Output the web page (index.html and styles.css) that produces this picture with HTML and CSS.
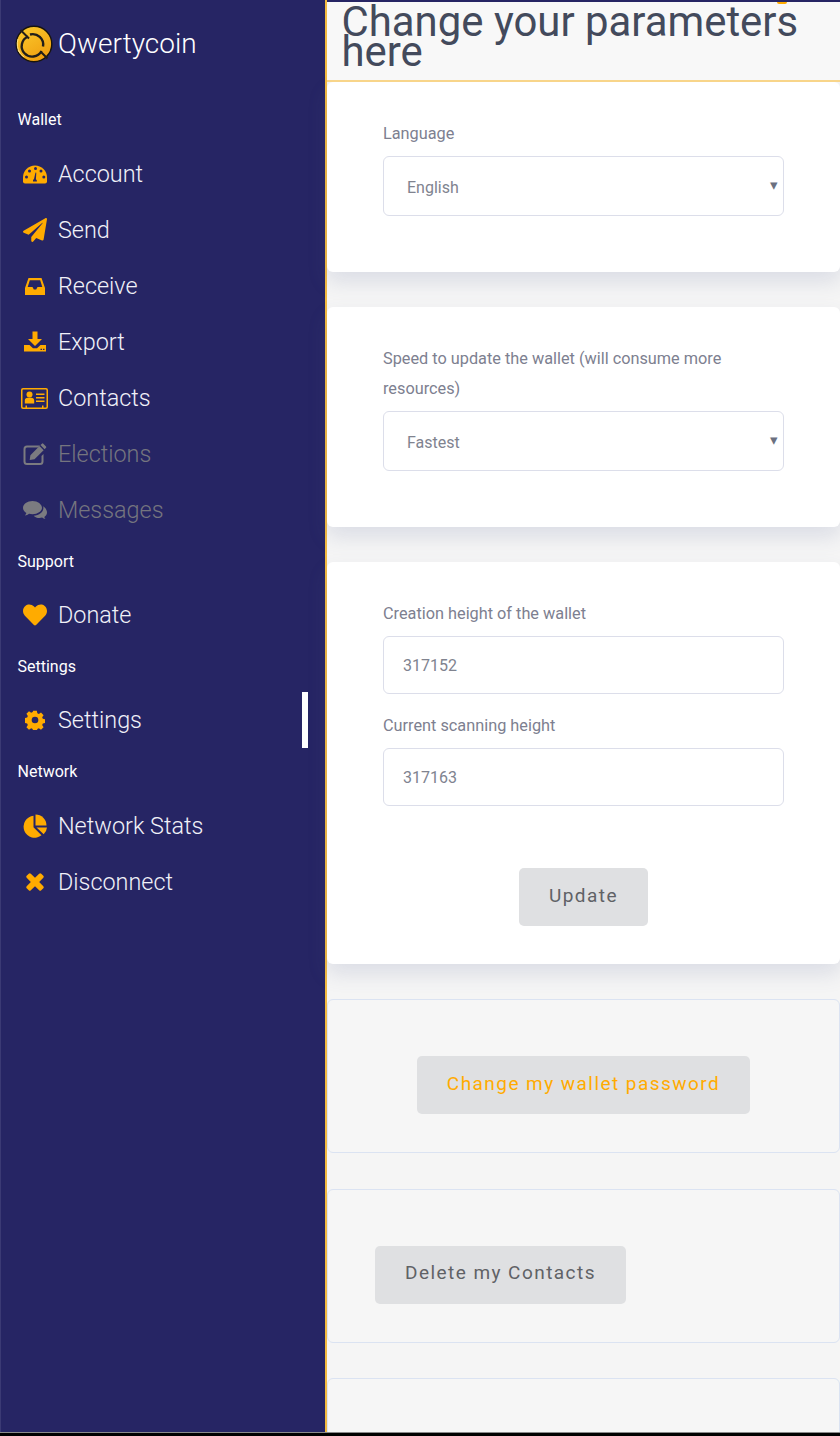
FILE: index.html
```html
<!DOCTYPE html>
<html>
<head>
  <meta charset="utf-8">
  <title>Qwertycoin - Settings</title>
  <link rel="stylesheet" href="styles.css">
</head>
<body>
  <div class="app">
    <!-- Left side: navigation -->
    <nav class="sidebar">
      <div class="brand">
        <svg class="logo" viewBox="0 0 38 38">
          <defs>
            <linearGradient id="coin" x1="0.2" y1="0" x2="0.8" y2="1">
              <stop offset="0" stop-color="#fbc92c"/>
              <stop offset="1" stop-color="#ef9c0e"/>
            </linearGradient>
          </defs>
          <circle cx="19" cy="19" r="17.800" fill="url(#coin)" stroke="#17140f" stroke-width="1.400"/>
          <path d="M13 11.500a10.500 10.500 0 1 0 13.500 14.500M15 9.500a10.500 10.500 0 0 1 13 12" fill="none" stroke="#221f1a" stroke-width="2.400"/>
          <path d="M5.500 5 14 13.500M25.500 26.500 32.500 33.500" fill="none" stroke="#221f1a" stroke-width="2"/>
          <path d="M9 32a17 17 0 0 1-6-7M3 14a17 17 0 0 0 2 14" fill="none" stroke="#fde08a" stroke-width="1"/>
        </svg>
        <span class="brand-name">Qwertycoin</span>
      </div>

      <div class="nav-label nav-label-tall">Wallet</div>
      <a class="nav-item">
        <svg class="nav-icon" viewBox="0 0 24 24">
          <path d="M2 21.500A2 2 0 0 1 0 19.500V15.500a12 12 0 0 1 24 0v4a2 2 0 0 1-2 2z"/>
          <g class="icon-cut">
            <circle cx="3.500" cy="15" r="1.500"/>
            <circle cx="6.500" cy="9" r="1.500"/>
            <circle cx="12.500" cy="6.500" r="1.500"/>
            <circle cx="18" cy="9" r="1.500"/>
            <circle cx="20.800" cy="15" r="1.500"/>
            <path d="M10 19.500a2.200 2.200 0 0 1 1-2.500l1.500-6.500.8.200-.4 6.500a2.200 2.200 0 0 1 1 2.300z"/>
          </g>
        </svg>
        Account
      </a>
      <a class="nav-item">
        <svg class="nav-icon" viewBox="0 0 512 512"><path d="M476 3.200L12.500 270.600c-18.100 10.400-15.800 35.600 2.200 43.200L121 358.400l287.300-253.200c5.500-4.900 13.300 2.600 8.600 8.300L176 407v80.500c0 23.600 28.500 32.900 42.500 15.800L282 426l124.600 52.200c14.200 6 30.400-2.900 33-18.200l72-432C515 7.800 493.300-6.800 476 3.200z"/></svg>
        Send
      </a>
      <a class="nav-item">
        <svg class="nav-icon" viewBox="0 0 24 24"><path fill-rule="evenodd" d="M5.500 4h13L22 14v7H2v-7zM6.800 6.200 4.700 13h4.800l1.300 2.500h2.400l1.300-2.500h4.800l-2.100-6.800z"/></svg>
        Receive
      </a>
      <a class="nav-item">
        <svg class="nav-icon" viewBox="0 0 24 24"><path fill-rule="evenodd" d="M9.500 1.500h5V9H19l-7 7-7-7h4.500zM1 15h5.500l3.500 3.200h4L17.500 15H23v6.500H1zM17.500 18.700v1.300h1.500v-1.300zm2.500 0v1.300h1.500v-1.300z"/></svg>
        Export
      </a>
      <a class="nav-item">
        <svg class="nav-icon nav-icon-wide" viewBox="0 0 27 21"><path fill-rule="evenodd" d="M2 0h23a2 2 0 0 1 2 2v17a2 2 0 0 1-2 2H2a2 2 0 0 1-2-2V2a2 2 0 0 1 2-2zm.2 1.500a.7.7 0 0 0-.7.700v16.600c0 .4.300.7.700.7h2.300v-2h1.500v2h15v-2h1.500v2h2.300c.4 0 .7-.3.7-.7V2.200a.7.7 0 0 0-.7-.7z"/><circle cx="8.500" cy="6.500" r="3"/><path d="M3.800 15.500v-3c0-1.700 1.300-2.700 2.700-2.700h4c1.400 0 2.700 1 2.700 2.700v3zM15 5.500h8.500V7H15zM15 9h8.500v1.500H15zM15 12.500h8.500V14H15z"/></svg>
        Contacts
      </a>
      <a class="nav-item nav-item-off">
        <svg class="nav-icon" viewBox="0 0 24 24"><path fill-rule="evenodd" d="M4 3.500h13l-2 2H4a1.500 1.500 0 0 0-1.500 1.500v12.500A1.500 1.500 0 0 0 4 21h13a1.500 1.500 0 0 0 1.500-1.500V14l2-2v7.500a3.500 3.500 0 0 1-3.500 3.500H4a3.500 3.500 0 0 1-3.500-3.500V7A3.500 3.500 0 0 1 4 3.500z"/><path d="M20.300 1.700l2.700 2.700a1 1 0 0 1 0 1.400l-1.400 1.400-4.100-4.100 1.400-1.400a1 1 0 0 1 1.400 0zM16.500 4.100l4.100 4.100-9.100 9.100-4.800.7.700-4.800z"/></svg>
        Elections
      </a>
      <a class="nav-item nav-item-off">
        <svg class="nav-icon" viewBox="0 0 24 24"><path d="M9.500 3C4.300 3 0 6 0 9.800c0 2.100 1.300 4 3.400 5.200-.3 1-.8 1.800-1.500 2.600 1.500-.3 3-1 4.200-1.900 1.100.3 2.200.5 3.400.5 5.200 0 9.500-3 9.500-6.400S14.700 3 9.500 3z"/><path d="M20.200 8.300c.1.500.2 1 .2 1.500 0 4.200-4.200 7.500-9.700 7.900 1.300 1.400 3.400 2.300 5.800 2.300.9 0 1.800-.1 2.600-.4 1 .7 2.100 1.300 3.400 1.500-.5-.7-.9-1.400-1.200-2.200 1.700-1 2.700-2.600 2.700-4.300 0-2.500-1.600-4.900-3.800-6.300z"/></svg>
        Messages
      </a>

      <div class="nav-label">Support</div>
      <a class="nav-item">
        <svg class="nav-icon" viewBox="0 0 512 512"><path d="M462.300 62.600C407.500 15.900 326 24.300 275.700 76.200L256 96.500l-19.700-20.300C186.100 24.300 104.500 15.900 49.700 62.600c-62.800 53.600-66.100 149.800-9.900 207.900l193.500 199.800c12.500 12.900 32.800 12.900 45.300 0l193.500-199.800c56.300-58.100 53-154.300-9.800-207.900z"/></svg>
        Donate
      </a>

      <div class="nav-label">Settings</div>
      <a class="nav-item nav-item-active">
        <svg class="nav-icon nav-icon-small" viewBox="0 0 24 24"><path fill-rule="evenodd" d="M9.800 1h4.400l.6 3 1.800.8 2.600-1.700 3.100 3.100-1.700 2.600.8 1.800 3 .6v4.400l-3 .6-.8 1.800 1.700 2.600-3.100 3.100-2.600-1.700-1.800.8-.6 3H9.800l-.6-3-1.800-.8-2.600 1.700-3.100-3.100 1.700-2.600-.8-1.800-3-.6V9.600l3-.6.8-1.800-1.700-2.600 3.100-3.100 2.600 1.700 1.800-.8zM12 8a4 4 0 1 0 0 8 4 4 0 0 0 0-8z"/></svg>
        Settings
      </a>

      <div class="nav-label nav-label-tall">Network</div>
      <a class="nav-item">
        <svg class="nav-icon" viewBox="0 0 24 24"><path d="M10.500 1.800v11.500l8 8A11 11 0 1 1 10.500 1.800z"/><path d="M12.500 0.500A11 11 0 0 1 23.500 11.500h-11z"/><path d="M13.500 13.500h10.500a11 11 0 0 1-3.300 6.800z"/></svg>
        Network Stats
      </a>
      <a class="nav-item">
        <svg class="nav-icon nav-icon-small" viewBox="0 0 24 24"><path d="M7 2 12 7l5-5a1.800 1.800 0 0 1 2.500 0l2.500 2.500a1.800 1.800 0 0 1 0 2.500l-5 5 5 5a1.800 1.800 0 0 1 0 2.500L19.500 22a1.800 1.800 0 0 1-2.500 0l-5-5-5 5a1.800 1.800 0 0 1-2.500 0L2 19.500A1.800 1.800 0 0 1 2 17l5-5-5-5a1.800 1.800 0 0 1 0-2.500L4.500 2A1.800 1.800 0 0 1 7 2z"/></svg>
        Disconnect
      </a>
    </nav>

    <!-- Right side: settings -->
    <main class="content">
      <span class="top-dot"></span>
      <header class="page-header">
        <h1 class="page-title">Change your parameters here</h1>
      </header>

      <section class="card">
        <label class="field-label" for="language">Language</label>
        <div class="select-wrap">
          <select class="field-select" id="language">
            <option>English</option>
          </select>
          <span class="select-arrow">▾</span>
        </div>
      </section>

      <section class="card">
        <label class="field-label" for="speed">Speed to update the wallet (will consume more resources)</label>
        <div class="select-wrap">
          <select class="field-select" id="speed">
            <option>Fastest</option>
          </select>
          <span class="select-arrow">▾</span>
        </div>
      </section>

      <section class="card card-form">
        <label class="field-label" for="creationHeight">Creation height of the wallet</label>
        <input class="field-input" id="creationHeight" type="text" value="317152">
        <label class="field-label field-label-next" for="scanHeight">Current scanning height</label>
        <input class="field-input" id="scanHeight" type="text" value="317163">
        <div class="form-actions">
          <button class="btn">Update</button>
        </div>
      </section>

      <section class="panel panel-center">
        <button class="btn btn-accent">Change my wallet password</button>
      </section>

      <section class="panel">
        <button class="btn">Delete my Contacts</button>
      </section>

      <section class="panel"></section>
    </main>
  </div>
</body>
</html>
```

FILE: styles.css
```css
/* General Page Styling */
html, body {
  margin: 0;
  padding: 0;
  height: 1436px;
  overflow: hidden;
  background: #000;
}

body {
  font-family: Roboto, "Liberation Sans", sans-serif;
}

.app {
  display: flex;
  height: 1432px;
  overflow: hidden;
  background: #f6f6f6;
  border-bottom: 1px solid #8a8a8a;
}

/* Sidebar */
.sidebar {
  flex: 0 0 327px;
  box-sizing: border-box;
  background: #262564;
  border-left: 1px solid #3b3a74;
  border-right: 2px solid #f2b93f;
}

.brand {
  display: flex;
  align-items: center;
  height: 96px;
  padding: 0 0 9px 14px;
  box-sizing: border-box;
}

.logo {
  width: 38px;
  height: 38px;
  flex-shrink: 0;
}

.brand-name {
  margin-left: 5px;
  font-size: 28px;
  font-weight: 300;
  color: #fff;
}

.nav-label {
  display: flex;
  align-items: center;
  box-sizing: border-box;
  height: 49px;
  padding: 0 0 3px 16.500px;
  font-size: 16px;
  color: #fff;
}

.nav-label-tall {
  height: 50px;
  padding-bottom: 4px;
}

.nav-item {
  display: flex;
  align-items: center;
  position: relative;
  height: 56px;
  font-size: 23.400px;
  font-weight: 300;
  color: #f1f1f8;
}

.nav-item-off {
  color: #75757f;
}

.nav-item-active::after {
  content: "";
  position: absolute;
  left: 301px;
  top: 0;
  width: 6px;
  height: 56px;
  background: #fff;
}

.nav-icon {
  width: 24px;
  height: 24px;
  margin: 0 11px 0 22px;
  fill: #ffab00;
  flex-shrink: 0;
}

.icon-cut {
  fill: #262564;
}

.nav-item-off .nav-icon {
  fill: #7b7b80;
}

.nav-icon-wide {
  width: 27px;
  height: 21px;
  margin: 0 10px 0 20px;
}

.nav-icon-small {
  width: 20px;
  height: 20px;
  margin: 0 13px 0 24px;
}

/* Main content */
.content {
  flex: 1;
  min-width: 0;
  position: relative;
  border-top: 2px solid #262564;
  background: #f5f5f5;
}

.top-dot {
  position: absolute;
  z-index: 2;
  top: 0;
  left: 450px;
  width: 10px;
  height: 2px;
  border-radius: 0 0 6px 6px;
  background: #ffab00;
}

.page-header {
  position: relative;
  z-index: 1;
  box-sizing: border-box;
  height: 80px;
  padding: 5px 14.500px 0;
  background: #f8f8f8;
  border-bottom: 2px solid #f8d58a;
}

.page-title {
  margin: 0;
  font-size: 41.900px;
  font-weight: 400;
  line-height: 30px;
  color: #434a5c;
}

.card {
  padding: 37px 56px 56px;
  margin-bottom: 35px;
  background: #fff;
  border-radius: 6px;
  box-shadow: 0 10px 20px rgba(90, 100, 150, 0.16);
}

.card-form {
  padding-bottom: 38px;
}

.field-label {
  display: block;
  margin-bottom: 7px;
  font-size: 16.300px;
  line-height: 30px;
  color: #7d8090;
}

.field-label-next {
  margin-top: 17px;
}

.select-wrap {
  position: relative;
}

.field-select {
  display: block;
  width: 100%;
  height: 60px;
  padding: 2px 23px 0;
  box-sizing: border-box;
  appearance: none;
  font-family: inherit;
  font-size: 16px;
  color: #80838f;
  background: #fff;
  border: 1px solid #dcdeea;
  border-radius: 6px;
}

.select-arrow {
  position: absolute;
  right: 6px;
  top: 19px;
  font-size: 15px;
  line-height: 20px;
  color: #6b7080;
}

.field-input {
  display: block;
  width: 100%;
  height: 58px;
  padding: 0 19px;
  box-sizing: border-box;
  font-family: inherit;
  font-size: 16px;
  color: #80838f;
  background: #fff;
  border: 1px solid #dcdeea;
  border-radius: 6px;
}

.form-actions {
  display: flex;
  justify-content: center;
  margin-top: 62px;
}

.btn {
  height: 58px;
  padding: 0 30px 4px;
  font-family: inherit;
  font-size: 19px;
  letter-spacing: 1.450px;
  color: #5f6266;
  background: #dfe0e2;
  border: none;
  border-radius: 5px;
}

.btn-accent {
  color: #ffab00;
}

.panel {
  box-sizing: border-box;
  height: 154px;
  padding: 56px 47px 0;
  margin-bottom: 35.500px;
  background: #f6f6f6;
  border: 1px solid #dbe3f2;
  border-radius: 6px;
}

.panel-center {
  display: flex;
  justify-content: center;
  align-items: flex-start;
}
```
